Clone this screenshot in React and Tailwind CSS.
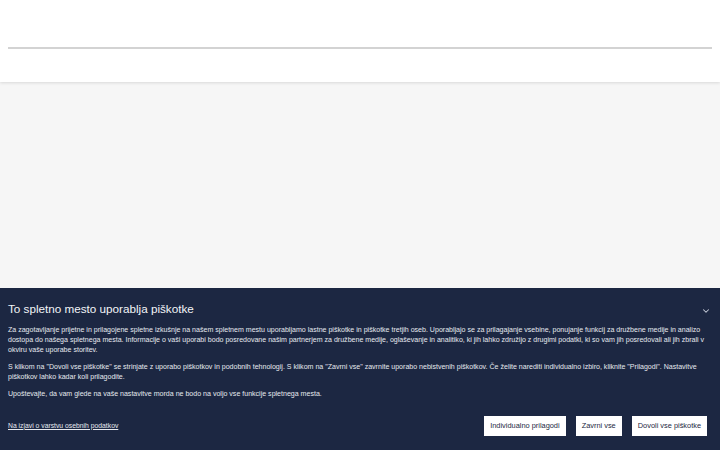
import { ChevronDown } from 'lucide-react';

export default function App() {
  return (
    <div className="flex h-[450px] w-[720px] flex-col overflow-hidden bg-[#f6f6f6] font-['Liberation_Sans',Arial,sans-serif]">
      {/* HEADER */}
      <header className="relative z-10 h-[82px] shrink-0 bg-white shadow-[0_1px_3px_rgba(0,0,0,0.12)]">
        <div className="px-2 pt-[47px]">
          <div className="h-[2px] bg-[#d3d3d3]" />
        </div>
      </header>

      <main className="flex-1" />

      {/* COOKIE BANNER */}
      <section className="h-[162px] shrink-0 bg-[#1c2742] px-2 text-[#e6e9ef]">
        <div className="flex items-start justify-between pt-[12px]">
          <h2 className="text-[11.7px] font-light leading-[17px] text-[#f2f4f7]">To spletno mesto uporablja piškotke</h2>
          <ChevronDown className="mr-[1px] mt-[6px] h-[10px] w-[10px] text-[#c9cfdb]" strokeWidth={2.5} />
        </div>

        <div className="mt-[8px] space-y-[7px] pr-[6px] text-[7.05px] leading-[10px]">
          <p>
            Za zagotavljanje prijetne in prilagojene spletne izkušnje na našem spletnem mestu uporabljamo lastne piškotke in piškotke tretjih oseb. Uporabljajo se za prilagajanje vsebine, ponujanje funkcij za družbene medije in analizo dostopa do našega spletnega mesta. Informacije o vaši uporabi bodo posredovane našim partnerjem za družbene medije, oglaševanje in analitiko, ki jih lahko združijo z drugimi podatki, ki so vam jih posredovali ali jih zbrali v okviru vaše uporabe storitev.
          </p>
          <p>
            S klikom na "Dovoli vse piškotke" se strinjate z uporabo piškotkov in podobnih tehnologij. S klikom na "Zavrni vse" zavrnite uporabo nebistvenih piškotkov. Če želite narediti individualno izbiro, kliknite "Prilagodi". Nastavitve piškotkov lahko kadar koli prilagodite.
          </p>
          <p>Upoštevajte, da vam glede na vaše nastavitve morda ne bodo na voljo vse funkcije spletnega mesta.</p>
        </div>

        <div className="mt-[17px] flex items-center justify-between pr-[5px]">
          <a href="#" className="text-[6.8px] underline">Na izjavi o varstvu osebnih podatkov</a>
          <div className="flex gap-[10px]">
            <button className="h-[20px] bg-white px-[6px] text-[7.4px] text-[#1c2742]">Individualno prilagodi</button>
            <button className="h-[20px] bg-white px-[6px] text-[7.4px] text-[#1c2742]">Zavrni vse</button>
            <button className="h-[20px] bg-white px-[6px] text-[7.4px] text-[#1c2742]">Dovoli vse piškotke</button>
          </div>
        </div>
      </section>
    </div>
  );
}
